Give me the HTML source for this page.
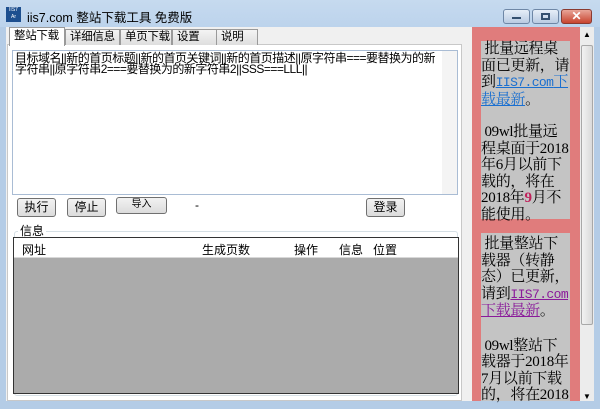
<!DOCTYPE html>
<html><head><meta charset="utf-8"><style>
*{margin:0;padding:0;box-sizing:border-box}
body{width:600px;height:409px;overflow:hidden;background:#b4cce6;font-family:"Liberation Sans","Noto Sans CJK SC",sans-serif;font-size:12px;position:relative}
.a{position:absolute}
.btn{position:absolute;border:1px solid #707070;border-radius:3px;background:linear-gradient(#f2f2f2,#dcdcdc);font-size:12px;text-align:center;line-height:17px;color:#000;white-space:nowrap}
.tab{position:absolute;top:29px;height:16px;border:1px solid #9a9a9a;border-bottom:none;background:linear-gradient(#f4f4f4,#dedede);font-size:11.5px;letter-spacing:-0.3px;line-height:15px;padding-left:4px;white-space:nowrap;overflow:hidden}
.rp{font-family:"Liberation Serif","Noto Serif CJK SC",serif;font-size:15px;line-height:16.5px;color:#000;white-space:nowrap;letter-spacing:-0.3px}
.m{font-family:"Liberation Mono",monospace;font-size:13px;letter-spacing:-0.6px}
.lnk{color:#1a6fd0;text-decoration:underline}
.lnk2{color:#8a1a9a;text-decoration:underline}
.ta{position:absolute;left:15px;font-size:12px;line-height:11px;white-space:nowrap;letter-spacing:-0.5px}
</style></head><body>
<div class="a" style="left:0;top:0;width:600px;height:27px;background:linear-gradient(#c6daef,#bcd3ec)"></div>
<div class="a" style="left:6px;top:7px;width:15px;height:15px;background:#1d4f8f;color:#fff;font-size:5px;line-height:7px;text-align:center">IIS7<br>Ar</div>
<div class="a" style="left:27px;top:7px;font-size:12.5px;color:#000">iis7.com 整站下载工具 免费版</div>
<div class="a" style="left:503px;top:9px;width:27px;height:15px;border:1px solid #6e87a6;border-radius:3px;background:linear-gradient(#e6eef8,#b9cbe2)"><div class="a" style="left:8px;top:7px;width:9px;height:2px;background:#34506f"></div></div>
<div class="a" style="left:532px;top:9px;width:27px;height:15px;border:1px solid #6e87a6;border-radius:3px;background:linear-gradient(#e6eef8,#b9cbe2)"><div class="a" style="left:8px;top:3px;width:9px;height:7px;border:2px solid #34506f"></div></div>
<div class="a" style="left:561px;top:9px;width:31px;height:15px;border:1px solid #8a3a30;border-radius:3px;background:linear-gradient(#e8a598,#c8442f);color:#fff;font-weight:bold;font-size:12px;text-align:center;line-height:13px">✕</div>
<div class="a" style="left:6px;top:27px;width:588px;height:374px;background:#f0f0f0"></div>
<div class="a" style="left:7px;top:44px;width:455px;height:357px;background:#fff;border:1px solid #c8c8c8"></div>
<div class="tab" style="left:9px;top:27px;height:19px;width:56px;background:#fff;z-index:2;line-height:17px">整站下载</div>
<div class="tab" style="left:65px;width:55px">详细信息</div>
<div class="tab" style="left:120px;width:52px">单页下载</div>
<div class="tab" style="left:172px;width:45px">设置</div>
<div class="tab" style="left:216px;width:42px">说明</div>
<div class="a" style="left:12px;top:50px;width:446px;height:145px;border:1px solid #a9bcd4;background:#fff"></div>
<div class="ta" style="top:53px">目标域名||新的首页标题||新的首页关键词||新的首页描述||原字符串===要替换为的新</div>
<div class="ta" style="top:64px">字符串||原字符串2===要替换为的新字符串2||SSS===LLL||</div>
<div class="a" style="left:442px;top:51px;width:15px;height:143px;background:#f4f4f4"></div>
<div class="btn" style="left:17px;top:198px;width:39px;height:19px">执行</div>
<div class="btn" style="left:67px;top:198px;width:39px;height:19px">停止</div>
<div class="btn" style="left:116px;top:197px;width:51px;height:17px;font-size:10px;line-height:14px">导入</div>
<div class="a" style="left:195px;top:198px">-</div>
<div class="btn" style="left:366px;top:198px;width:39px;height:19px">登录</div>
<div class="a" style="left:14px;top:231px;width:444px;height:165px;border:1px solid #d5dfe5;border-radius:3px"></div>
<div class="a" style="left:18px;top:222px;background:#fff;padding:0 2px">信息</div>
<div class="a" style="left:13px;top:237px;width:446px;height:157px;border:1px solid #333;background:#ababab"></div>
<div class="a" style="left:14px;top:238px;width:444px;height:20px;background:#fff;border-bottom:1px solid #d8d8d8"></div>
<div class="a" style="left:22px;top:241px">网址</div>
<div class="a" style="left:202px;top:241px">生成页数</div>
<div class="a" style="left:294px;top:241px">操作</div>
<div class="a" style="left:339px;top:241px">信息</div>
<div class="a" style="left:373px;top:241px">位置</div>
<div class="a" style="left:472px;top:27px;width:108px;height:374px;background:#e07c7c"></div>
<div class="a" style="left:481px;top:41px;width:89px;height:178px;background:#c4c4c4"></div>
<div class="a" style="left:481px;top:233px;width:89px;height:168px;background:#c4c4c4"></div>
<div class="a rp" style="left:481px;top:41px;width:90px">
&nbsp;批量远程桌<br>面已更新，请<br>到<span class="lnk"><span class="m">IIS7.com</span>下</span><br><span class="lnk">载最新</span>。<br>
<div style="height:16px"></div>
&nbsp;09wl批量远<br>程桌面于2018<br>年6月以前下<br>载的，将在<br>2018年<b style="color:#c0205a">9</b>月不<br>能使用。
</div>
<div class="a rp" style="left:481px;top:236px;width:90px">
&nbsp;批量整站下<br>载器（转静<br>态）已更新，<br>请到<span class="lnk2 m">IIS7.com</span><br><span class="lnk2">下载最新</span>。<br>
<div style="height:18px"></div>
&nbsp;09wl整站下<br>载器于2018年<br>7月以前下载<br>的，将在2018
</div>
<div class="a" style="left:580px;top:27px;width:14px;height:374px;background:#ececec"></div>
<div class="a" style="left:581px;top:45px;width:12px;height:280px;border:1px solid #a8a8a8;border-radius:2px;background:linear-gradient(90deg,#f2f2f2,#dadada)"></div>
<div class="a" style="left:583px;top:30px;font-size:8px">▲</div>
<div class="a" style="left:583px;top:392px;font-size:8px">▼</div>
</body></html>
